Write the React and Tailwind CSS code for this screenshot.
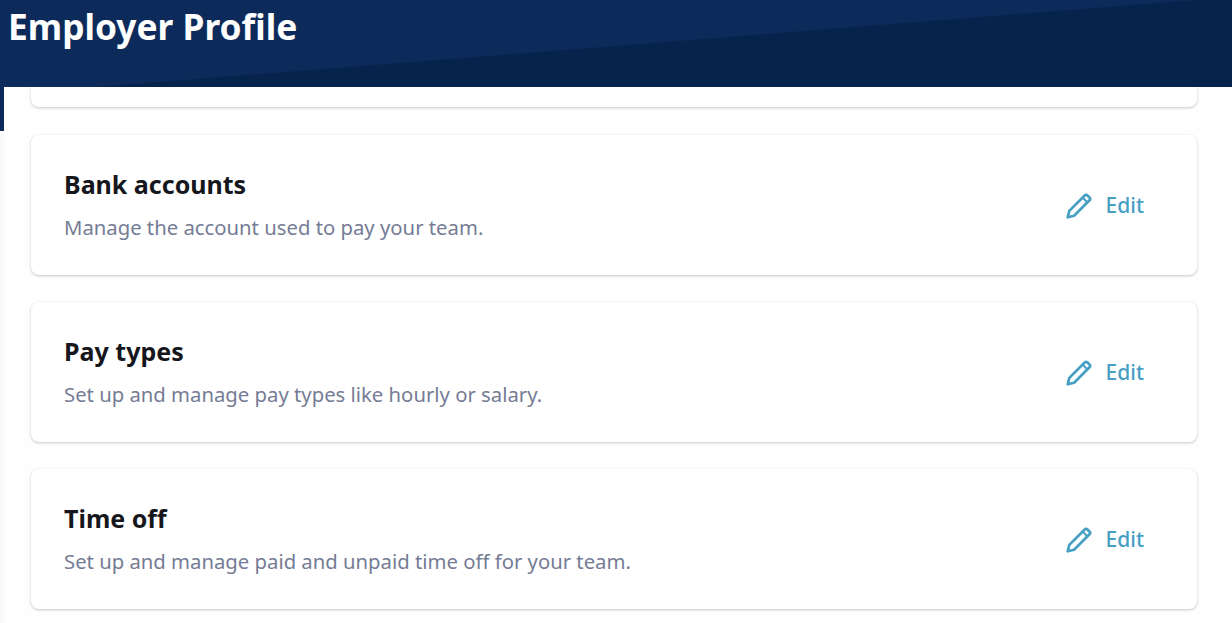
const sections = [
  { title: "Bank accounts", text: "Manage the account used to pay your team." },
  { title: "Pay types", text: "Set up and manage pay types like hourly or salary." },
  { title: "Time off", text: "Set up and manage paid and unpaid time off for your team." },
];

function EditIcon() {
  return (
    <svg viewBox="0 0 26 26" className="h-[26px] w-[26px]" fill="none" stroke="currentColor" strokeWidth="2.7" strokeLinejoin="round">
      <path d="M1.700 24.300l1.600-6.400L18.700 2.500a2 2 0 0 1 2.800 0l2 2a2 2 0 0 1 0 2.800L8.100 22.700z" />
      <path d="M16.800 4.800l4.400 4.400" strokeWidth="2" />
    </svg>
  );
}

function SectionCard({ title, text }) {
  return (
    <div className="flex h-[140px] items-center justify-between rounded-lg bg-white pl-[33px] pr-[53px] shadow-[0_1px_3px_rgba(0,0,0,0.22),0_0_2px_rgba(0,0,0,0.04)]">
      <div className="pb-[3px]">
        <h2 className="text-[25px] font-bold leading-[34px] text-[#16171d]">{title}</h2>
        <p className="mt-[12px] text-[20.3px] leading-[28px] text-[#757c95]">{text}</p>
      </div>
      <button className="mt-px flex items-center gap-[14px] text-[21px] font-medium text-[#46a0c4]">
        <EditIcon />
        Edit
      </button>
    </div>
  );
}

export default function App() {
  return (
    <div className="h-[623px] overflow-hidden bg-[#fefefe] font-['Noto_Sans','Open_Sans',sans-serif]">
      <header className="relative h-[87px] bg-[#0d2b5a]">
        <div className="absolute inset-0 bg-[#06244b] [clip-path:polygon(96px_87px,1196px_0,1232px_0,1232px_87px)]" />
        <h1 className="relative pl-[8px] pt-[4px] text-[35.3px] font-bold leading-[44px] text-white">Employer Profile</h1>
      </header>
      <div className="flex">
        <div className="h-[536px] w-[4px] shrink-0 bg-[#fafafa]">
          <div className="h-[44px] bg-[#0d2b5a]" />
        </div>
        <main className="flex w-[1193px] flex-col gap-[27px] pl-[27px]">
          <div className="mb-px h-[20px] shrink-0 rounded-b-lg bg-white shadow-[0_1px_3px_rgba(0,0,0,0.22)]" />
          {sections.map((s) => (
            <SectionCard key={s.title} {...s} />
          ))}
        </main>
      </div>
    </div>
  );
}
